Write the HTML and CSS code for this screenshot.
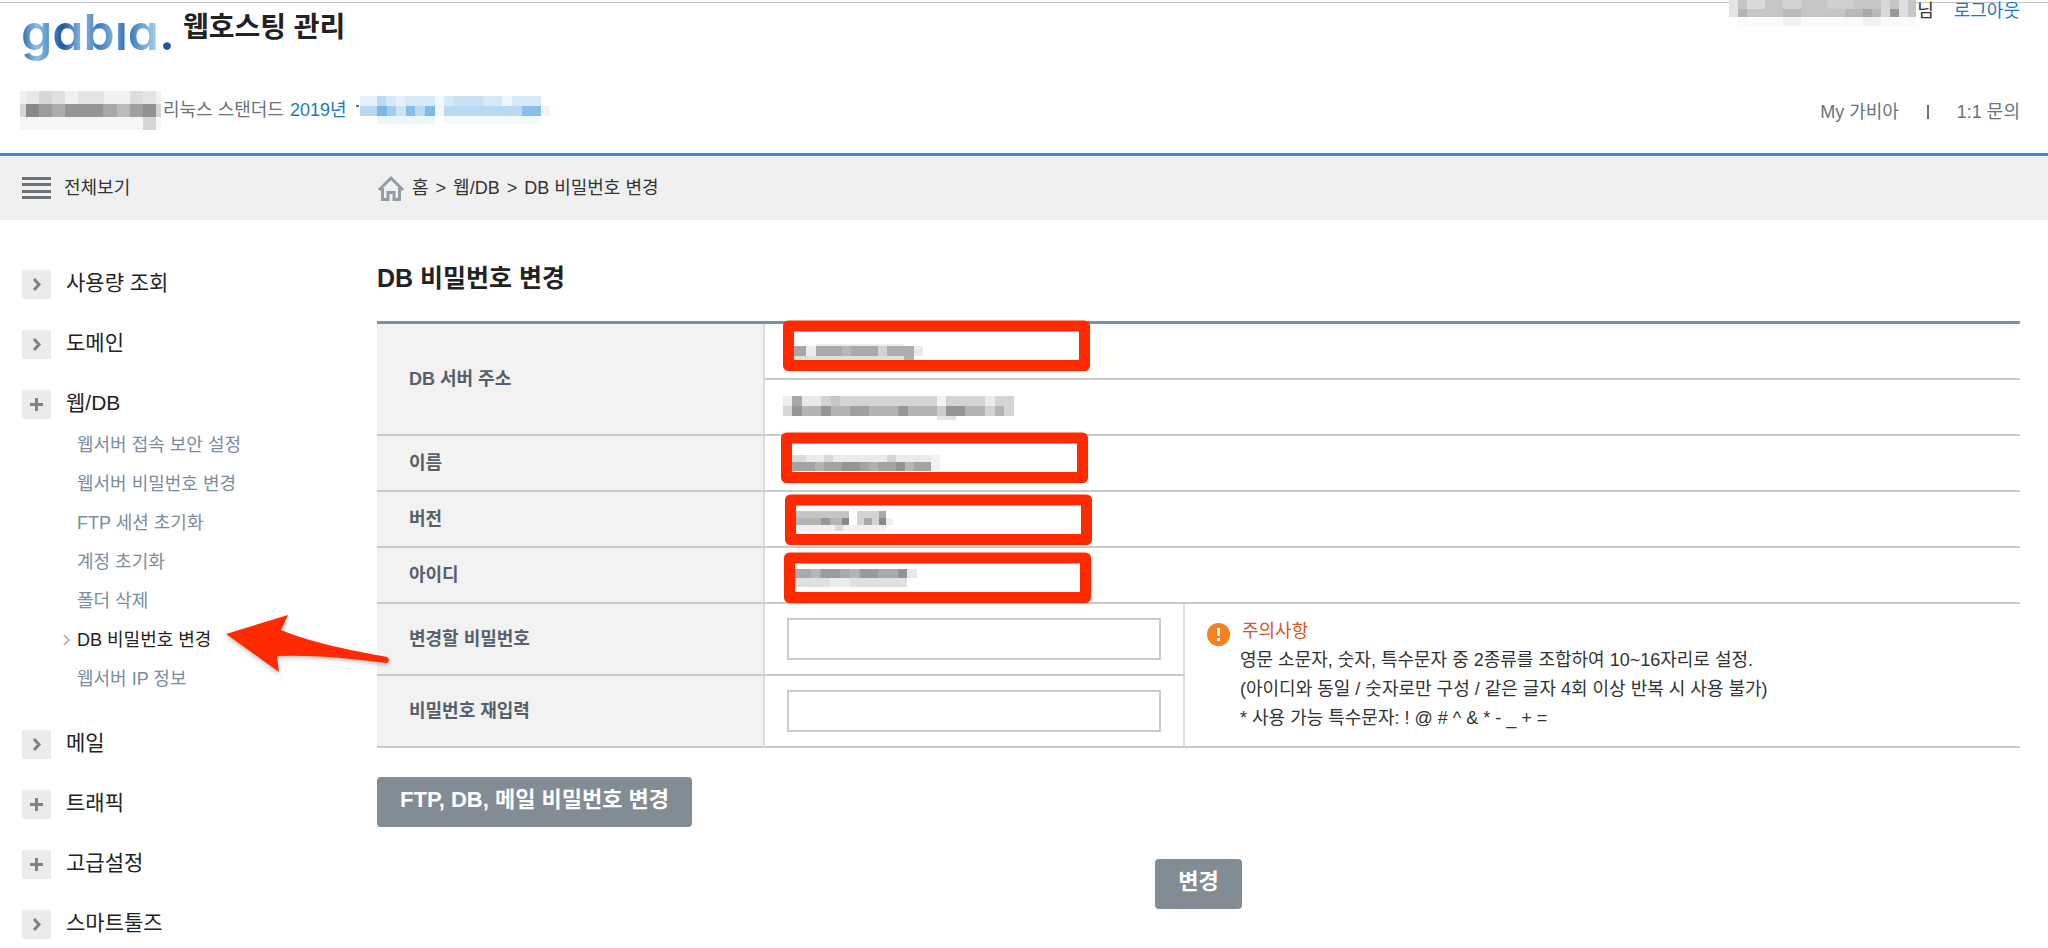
FILE: index.html
```html
<!DOCTYPE html>
<html lang="ko">
	<head>
		<meta charset="UTF-8">
		<title>웹호스팅 관리</title>
		<link rel="stylesheet" href="styles.css">
	</head>
	<body>
		<header class="header">
			<div class="top">
				<a class="logo" href="#" aria-label="gabia">
					<svg width="154" height="70" viewBox="0 0 154 70">
						<defs>
							<linearGradient id="blue" x1="0" y1="0" x2="1" y2="0">
								<stop offset="0" stop-color="#2a64ab"/>
								<stop offset=".1" stop-color="#8fc0e2"/>
								<stop offset=".2" stop-color="#4a8cc6"/>
								<stop offset=".27" stop-color="#2058a2"/>
								<stop offset=".4" stop-color="#8fbfe0"/>
								<stop offset=".5" stop-color="#3a7abb"/>
								<stop offset=".6" stop-color="#7db2da"/>
								<stop offset=".68" stop-color="#2c69ae"/>
								<stop offset=".76" stop-color="#5a9acd"/>
								<stop offset=".88" stop-color="#a3cfe9"/>
								<stop offset=".93" stop-color="#1f56a2"/>
								<stop offset="1" stop-color="#1f56a2"/>
							</linearGradient>
						</defs>
						<text x="1" y="47" class="logo-text" fill="url(#blue)">gabıa.</text>
					</svg>
				</a>
				<h1>웹호스팅 관리</h1>
				<div class="user">
					<svg class="mosaic" width="188" height="26" aria-hidden="true">
						<rect x="0" y="0" width="9" height="17" fill="#e4e4e4"/>
						<rect x="9" y="0" width="178" height="17" fill="#c6c6c6"/>
						<rect x="18" y="0" width="18" height="9" fill="#dadada"/>
						<rect x="54" y="0" width="18" height="9" fill="#d2d2d2"/>
						<rect x="98" y="0" width="27" height="9" fill="#cfcfcf"/>
						<rect x="152" y="0" width="9" height="17" fill="#d8d8d8"/>
						<rect x="170" y="0" width="9" height="17" fill="#dedede"/>
						<rect x="9" y="9" width="9" height="8" fill="#b4b4b4"/>
						<rect x="54" y="9" width="18" height="8" fill="#bbb"/>
						<rect x="116" y="9" width="36" height="8" fill="#b8b8b8"/>
						<rect x="134" y="9" width="9" height="8" fill="#a8a8a8"/>
						<rect x="161" y="9" width="9" height="8" fill="#989898"/>
						<rect x="9" y="17" width="178" height="9" fill="#fafafa"/>
						<rect x="54" y="17" width="18" height="9" fill="#f0f0f0"/>
						<rect x="134" y="17" width="18" height="9" fill="#f2f2f2"/>
					</svg>
					<span>님</span>
					<a class="blue" href="#">로그아웃</a>
				</div>
			</div>
			<div class="sub">
				<svg class="mosaic" width="141" height="40" aria-hidden="true">
					<rect x="0" y="1" width="141" height="25" fill="#f1f1f1"/>
					<rect x="6" y="1" width="13" height="13" fill="#e8e8e8"/>
					<rect x="19" y="1" width="13" height="13" fill="#d8d8d8"/>
					<rect x="32" y="1" width="13" height="13" fill="#e0e0e0"/>
					<rect x="58" y="1" width="26" height="13" fill="#e4e4e4"/>
					<rect x="110" y="1" width="13" height="13" fill="#dcdcdc"/>
					<rect x="123" y="1" width="13" height="13" fill="#e4e4e4"/>
					<rect x="0" y="14" width="141" height="13" fill="#d4d4d4"/>
					<rect x="6" y="14" width="13" height="13" fill="#888"/>
					<rect x="19" y="14" width="13" height="13" fill="#9c9c9c"/>
					<rect x="32" y="14" width="13" height="13" fill="#acacac"/>
					<rect x="45" y="14" width="38" height="13" fill="#969696"/>
					<rect x="83" y="14" width="14" height="13" fill="#a8a8a8"/>
					<rect x="97" y="14" width="13" height="13" fill="#bbb"/>
					<rect x="110" y="14" width="13" height="13" fill="#a0a0a0"/>
					<rect x="123" y="14" width="13" height="13" fill="#929292"/>
					<rect x="0" y="27" width="141" height="13" fill="#f6f6f6"/>
					<rect x="123" y="27" width="13" height="13" fill="#d6d6d6"/>
				</svg>
				<span class="plan">리눅스 스탠더드</span>
				<span class="blue">2019년</span>
				<svg class="mosaic" width="194" height="28" aria-hidden="true">
					<rect x="0" y="9" width="3" height="2" fill="#2a7fbd"/>
					<rect x="4" y="0" width="181" height="10" fill="#d6e9f7"/>
					<rect x="4" y="0" width="17" height="10" fill="#e4f1fa"/>
					<rect x="21" y="0" width="9" height="10" fill="#b9daf2"/>
					<rect x="40" y="0" width="9" height="10" fill="#e6f2fb"/>
					<rect x="98" y="0" width="29" height="10" fill="#c8e2f5"/>
					<rect x="146" y="0" width="10" height="10" fill="#eef6fc"/>
					<rect x="4" y="10" width="181" height="10" fill="#b8d9f1"/>
					<rect x="21" y="10" width="10" height="10" fill="#7cb8e6"/>
					<rect x="31" y="10" width="9" height="10" fill="#a3cdee"/>
					<rect x="40" y="10" width="10" height="10" fill="#cde4f6"/>
					<rect x="50" y="10" width="9" height="10" fill="#86bde8"/>
					<rect x="69" y="10" width="10" height="10" fill="#80bae7"/>
					<rect x="79" y="0" width="9" height="20" fill="#f1f8fd"/>
					<rect x="166" y="10" width="19" height="10" fill="#88bfe9"/>
					<rect x="185" y="10" width="9" height="10" fill="#ebf5fc"/>
					<rect x="21" y="20" width="58" height="8" fill="#eef6fc"/>
					<rect x="88" y="20" width="97" height="8" fill="#f4f9fd"/>
				</svg>
				<nav class="links">
					<a href="#">My 가비아</a>
					<i class="bar"></i>
					<a href="#">1:1 문의</a>
				</nav>
			</div>
		</header>

		<div class="crumbs">
			<a class="all" href="#">
				<svg width="29" height="24" fill="#6d7278"><path d="M0 1h29v3H0zM0 7h29v3H0zM0 14h29v3H0zM0 20h29v3H0z"/></svg>
				전체보기
			</a>
			<div class="path">
				<svg width="28" height="28" viewBox="0 0 28 28" fill="none" stroke="#949ba3" stroke-width="3"><path d="M2 16L14 4l12 12M5.500 14v11.500h5.500v-7h6v7h5.500V14"/></svg>
				<a href="#">홈</a> &gt; <a href="#">웹/DB</a> &gt; <a href="#">DB 비밀번호 변경</a>
			</div>
		</div>

		<div class="wrap">
			<nav class="side">
				<ul class="menu">
					<li><a href="#"><svg class="ico" viewBox="0 0 29 29"><path d="M12 9l5 5.500-5 5.500"/></svg>사용량 조회</a></li>
					<li><a href="#"><svg class="ico" viewBox="0 0 29 29"><path d="M12 9l5 5.500-5 5.500"/></svg>도메인</a></li>
					<li>
						<a href="#"><svg class="ico" viewBox="0 0 29 29"><path d="M8 14.500h13M14.500 8v13"/></svg>웹/DB</a>
						<ul class="submenu">
							<li><a href="#">웹서버 접속 보안 설정</a></li>
							<li><a href="#">웹서버 비밀번호 변경</a></li>
							<li><a href="#">FTP 세션 초기화</a></li>
							<li><a href="#">계정 초기화</a></li>
							<li><a href="#">폴더 삭제</a></li>
							<li class="on"><svg width="8" height="14" viewBox="0 0 8 14" fill="none" stroke="#b9bcc0" stroke-width="2"><path d="M1 2l5 5-5 5"/></svg><a href="#">DB 비밀번호 변경</a></li>
							<li><a href="#">웹서버 IP 정보</a></li>
						</ul>
					</li>
					<li><a href="#"><svg class="ico" viewBox="0 0 29 29"><path d="M12 9l5 5.500-5 5.500"/></svg>메일</a></li>
					<li><a href="#"><svg class="ico" viewBox="0 0 29 29"><path d="M8 14.500h13M14.500 8v13"/></svg>트래픽</a></li>
					<li><a href="#"><svg class="ico" viewBox="0 0 29 29"><path d="M8 14.500h13M14.500 8v13"/></svg>고급설정</a></li>
					<li><a href="#"><svg class="ico" viewBox="0 0 29 29"><path d="M12 9l5 5.500-5 5.500"/></svg>스마트툴즈</a></li>
				</ul>
			</nav>

			<main class="main">
				<h2>DB 비밀번호 변경</h2>
				<form action="#">
				<table>
					<colgroup><col class="c1"><col class="c2"><col></colgroup>
					<tr>
						<th rowspan="2" scope="row">DB 서버 주소</th>
						<td colspan="2">
							<svg class="mosaic" width="140" height="20" aria-hidden="true">
								<rect x="10" y="4" width="13" height="10" fill="#a6a6a6"/>
								<rect x="23" y="4" width="10" height="14" fill="#ececec"/>
								<rect x="33" y="4" width="62" height="10" fill="#a9a9a9"/>
								<rect x="59" y="4" width="9" height="10" fill="#b8b8b8"/>
								<rect x="95" y="4" width="9" height="10" fill="#d2d2d2"/>
								<rect x="104" y="4" width="27" height="10" fill="#adadad"/>
								<rect x="33" y="2" width="88" height="2" fill="#ececec"/>
								<rect x="10" y="14" width="111" height="4" fill="#dedede"/>
								<rect x="121" y="14" width="10" height="4" fill="#b0b0b0"/>
								<rect x="131" y="4" width="9" height="10" fill="#eaeaea"/>
							</svg>
						</td>
					</tr>
					<tr>
						<td colspan="2">
							<svg class="mosaic" width="231" height="24" aria-hidden="true">
								<rect x="0" y="0" width="231" height="10" fill="#d4d4d4"/>
								<rect x="0" y="0" width="9" height="10" fill="#eee"/>
								<rect x="9" y="0" width="10" height="10" fill="#a8a8a8"/>
								<rect x="19" y="0" width="19" height="10" fill="#e9e9e9"/>
								<rect x="48" y="0" width="9" height="10" fill="#c6c6c6"/>
								<rect x="154" y="0" width="9" height="10" fill="#f2f2f2"/>
								<rect x="202" y="0" width="10" height="10" fill="#ebebeb"/>
								<rect x="0" y="10" width="231" height="10" fill="#b4b4b4"/>
								<rect x="0" y="10" width="9" height="10" fill="#d8d8d8"/>
								<rect x="9" y="10" width="10" height="10" fill="#969696"/>
								<rect x="38" y="10" width="10" height="10" fill="#969696"/>
								<rect x="67" y="10" width="19" height="10" fill="#a0a0a0"/>
								<rect x="115" y="10" width="10" height="10" fill="#989898"/>
								<rect x="154" y="10" width="9" height="10" fill="#ccc"/>
								<rect x="163" y="10" width="19" height="10" fill="#959595"/>
								<rect x="202" y="10" width="10" height="10" fill="#d2d2d2"/>
								<rect x="221" y="10" width="10" height="10" fill="#d6d6d6"/>
								<rect x="154" y="20" width="19" height="4" fill="#e3e3e3"/>
							</svg>
						</td>
					</tr>
					<tr>
						<th scope="row">이름</th>
						<td colspan="2">
							<svg class="mosaic" width="158" height="18" aria-hidden="true">
								<rect x="8" y="0" width="142" height="7" fill="#ebebeb"/>
								<rect x="8" y="0" width="15" height="7" fill="#dadada"/>
								<rect x="41" y="0" width="9" height="7" fill="#d8d8d8"/>
								<rect x="104" y="0" width="9" height="7" fill="#d5d5d5"/>
								<rect x="8" y="7" width="140" height="9" fill="#a3a3a3"/>
								<rect x="32" y="7" width="9" height="9" fill="#b2b2b2"/>
								<rect x="59" y="7" width="18" height="9" fill="#949494"/>
								<rect x="86" y="7" width="9" height="9" fill="#b0b0b0"/>
								<rect x="113" y="7" width="9" height="9" fill="#929292"/>
								<rect x="122" y="7" width="9" height="9" fill="#b6b6b6"/>
								<rect x="148" y="0" width="9" height="16" fill="#f2f2f2"/>
							</svg>
						</td>
					</tr>
					<tr>
						<th scope="row">버전</th>
						<td colspan="2">
							<svg class="mosaic" width="110" height="22" viewBox="0 -2 110 22" aria-hidden="true">
								<rect x="12" y="0" width="54" height="7" fill="#c4c4c4"/>
								<rect x="12" y="7" width="54" height="7" fill="#b4b4b4"/>
								<rect x="38" y="7" width="9" height="7" fill="#989898"/>
								<rect x="59" y="7" width="7" height="7" fill="#888"/>
								<rect x="12" y="14" width="91" height="6" fill="#f0f0f0"/>
								<rect x="52" y="14" width="8" height="6" fill="#dadada"/>
								<rect x="74" y="0" width="29" height="14" fill="#d3d3d3"/>
								<rect x="81" y="7" width="8" height="7" fill="#a8a8a8"/>
								<rect x="96" y="0" width="7" height="7" fill="#aaa"/>
								<rect x="96" y="7" width="7" height="7" fill="#8a8a8a"/>
								<rect x="103" y="7" width="7" height="7" fill="#eee"/>
							</svg>
						</td>
					</tr>
					<tr>
						<th scope="row">아이디</th>
						<td colspan="2">
							<svg class="mosaic" width="134" height="24" viewBox="0 -4 134 24" aria-hidden="true">
								<rect x="12" y="1" width="112" height="9" fill="#aaa"/>
								<rect x="28" y="1" width="9" height="9" fill="#b8b8b8"/>
								<rect x="38" y="1" width="19" height="9" fill="#9c9c9c"/>
								<rect x="67" y="1" width="9" height="9" fill="#b5b5b5"/>
								<rect x="77" y="1" width="18" height="9" fill="#9a9a9a"/>
								<rect x="115" y="1" width="9" height="9" fill="#949494"/>
								<rect x="124" y="1" width="10" height="9" fill="#e8e8e8"/>
								<rect x="12" y="10" width="112" height="9" fill="#e0e0e0"/>
								<rect x="47" y="10" width="20" height="9" fill="#ececec"/>
							</svg>
						</td>
					</tr>
					<tr class="tall">
						<th scope="row"><label for="pw">변경할 비밀번호</label></th>
						<td class="pw"><input type="password" id="pw"></td>
						<td rowspan="2" class="note">
							<div class="notice">
								<svg width="23" height="23" viewBox="0 0 23 23"><circle cx="11.500" cy="11.500" r="11.500" fill="#f58220"/><path d="M10 5h3l-.5 8h-2zM10 15h3v3h-3z" fill="#fff"/></svg>
								<div>
									<strong>주의사항</strong>
									<p>영문 소문자, 숫자, 특수문자 중 2종류를 조합하여 10~16자리로 설정.</p>
									<p>(아이디와 동일 / 숫자로만 구성 / 같은 글자 4회 이상 반복 시 사용 불가)</p>
									<p>* 사용 가능 특수문자: ! @ # ^ &amp; * - _ + =</p>
								</div>
							</div>
						</td>
					</tr>
					<tr class="tall">
						<th scope="row"><label for="pw2">비밀번호 재입력</label></th>
						<td class="pw"><input type="password" id="pw2"></td>
					</tr>
				</table>
				<button type="button" class="btn">FTP, DB, 메일 비밀번호 변경</button>
				<div class="center"><button type="submit" class="btn">변경</button></div>
				</form>
			</main>
		</div>

		<!-- red marks drawn over the page -->
		<svg class="marks" width="1100" height="700" aria-hidden="true">
			<g fill="none" stroke="#ff2a00" stroke-width="11" stroke-linejoin="round">
				<rect x="788.500" y="326" width="296" height="39.500"/>
				<rect x="786.500" y="438" width="296" height="39.500"/>
				<rect x="790.500" y="500" width="296" height="39.500"/>
				<rect x="789.500" y="558" width="296" height="39.500"/>
			</g>
			<path class="arrow" d="M226 634L288 615L281 630Q313 644 387 657Q391 660 387 663Q320 654 277 656L279 672Z" fill="#ff2a00"/>
		</svg>
	</body>
</html>
```

FILE: styles.css
```css
*{
	box-sizing: border-box;
	margin:0;
	padding:0;
}
body{
	position: relative;
	padding-top:2px;
	background: #fff;
	color:#333;
	font:18px/28px "Liberation Sans","Noto Sans CJK KR",sans-serif;
}
a{
	color:inherit;
	text-decoration: none;
}
ul{
	list-style: none;
}
svg{
	display: block;
	flex:none;
}
.mosaic{
	shape-rendering: crispEdges;
}
.blue{
	color:#1a7abf;
}

/* header */
.header{
	border-top:1px solid #c4c4c4;
	border-bottom:3px solid #3c8fd2;
}
.top{
	display: flex;
	height:74px;
	padding:0 28px 0 20px;
}
.logo-text{
	font:600 50px "Inter",sans-serif;
	font-feature-settings: "cv11";
}
h1{
	margin-left:9px;
	color:#222;
	font-size:28px;
	line-height:50px;
}
.user{
	display: flex;
	align-items: flex-start;
	margin-left:auto;
	line-height:16px;
}
.user .mosaic{
	margin-top:-3px;
}
.user .blue{
	margin-left:20px;
}
.sub{
	display: flex;
	align-items: center;
	height:76px;
	padding:0 28px 10px 20px;
}
.plan{
	margin:0 6px 0 2px;
	color:#6a737e;
}
.sub .blue{
	margin-right:9px;
}
.links{
	display: flex;
	align-items: center;
	gap:28px;
	margin-left:auto;
	padding-top:4px;
	color:#69727f;
}
.bar{
	width:2px;
	height:14px;
	background: #69727f;
}
.crumbs{
	display: flex;
	align-items: center;
	height:64px;
	background: #f0f0f0;
}
.all{
	display: flex;
	align-items: center;
	gap:13px;
	width:377px;
	padding-left:22px;
}
.path{
	display: flex;
	align-items: center;
	gap:7px;
}

/* left menu */
.wrap{
	display: flex;
}
.side{
	width:377px;
	padding:50px 0 0 22px;
}
.menu > li > a{
	display: flex;
	align-items: flex-start;
	gap:15px;
	height:60px;
	color:#222;
	font-size:21px;
	line-height:26px;
}
.ico{
	width:29px;
	height:29px;
	border-radius:2px;
	background: #eaebed;
	fill:none;
	stroke:#808284;
	stroke-width:3px;
}
.submenu{
	margin-top:-25px;
	padding:0 0 32px 41px;
	color:#7b8d9e;
}
.submenu li{
	display: flex;
	align-items: center;
	gap:6px;
	height:39px;
	padding-left:14px;
}
.submenu .on{
	padding-left:0;
	color:#222;
}

/* content */
.main{
	flex:1;
	padding:38px 28px 0 0;
}
h2{
	margin-bottom:23px;
	color:#222;
	font-size:25px;
	line-height:40px;
}
table{
	width:100%;
	border-top:3px solid #7b91a2;
	border-spacing: 0;
	table-layout: fixed;
}
.c1{
	width:388px;
}
.c2{
	width:420px;
}
th,td{
	height:56px;
	border-bottom:2px solid #c8cacc;
	text-align: left;
}
th{
	padding-left:32px;
	border-right:2px solid #dcdcdc;
	background: #f2f2f2;
	color:#56606b;
}
td{
	padding-left:18px;
}
td .mosaic{
	margin-top:2px;
}
.tall th,.tall td{
	height:72px;
}
td.pw{
	padding:0 22px;
	border-right:2px solid #dcdcdc;
}
input{
	display: block;
	width:100%;
	height:42px;
	padding:0 10px;
	border:2px solid #ccc;
	background: #fff;
	font:inherit;
}
td.note{
	padding-left:22px;
}
.notice{
	display: flex;
	gap:10px;
	line-height:29px;
}
.notice svg{
	margin-top:6px;
}
.notice strong{
	padding-left:2px;
	color:#e0531f;
	font-weight: normal;
}
.btn{
	height:50px;
	padding:0 23px 4px;
	border:0;
	border-radius:4px;
	background: #828c94;
	color:#fff;
	font:bold 22px/28px "Liberation Sans","Noto Sans CJK KR",sans-serif;
}
form > .btn{
	margin-top:29px;
}
.center{
	margin-top:32px;
	text-align: center;
}

.marks{
	position: absolute;
	top:0;
	left:0;
	pointer-events: none;
}
.arrow{
	filter:drop-shadow(0 2px 2px rgba(0,0,0,.25));
}
```
